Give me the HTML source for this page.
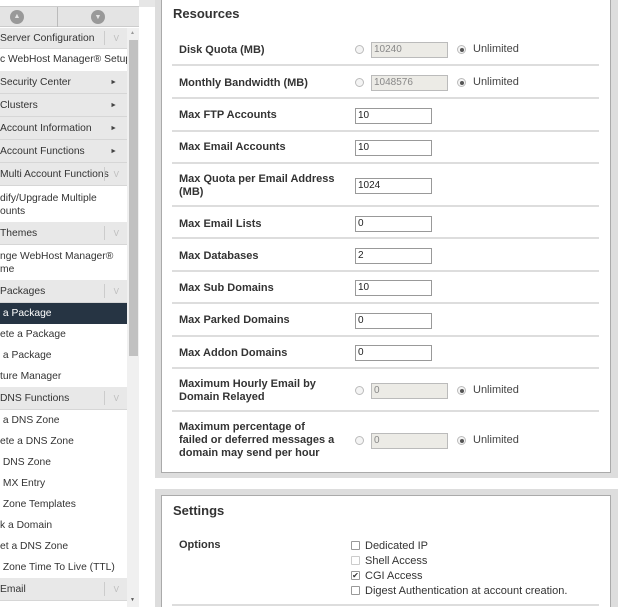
<!DOCTYPE html><html><head><style>
*{margin:0;padding:0;box-sizing:border-box}
body{width:618px;height:607px;overflow:hidden;background:#fff;font-family:"Liberation Sans",sans-serif;position:relative;color:#333}
.a{position:absolute}
.sb{left:0;width:127px;font-size:10.3px;white-space:nowrap;overflow:hidden}
.h{background:#e8e8e8;border-bottom:1px solid #d6d6d6;color:#333}
.i{background:#fff;color:#333}
.lb{position:absolute;left:179px;font-size:11px;font-weight:bold;color:#333;line-height:13px}
.sep{position:absolute;left:172px;width:427px;height:2px;background:#ddd}
.in{position:absolute;left:355px;width:77px;height:16px;border:1px solid #999;background:#fff;font-size:10px;padding-left:2px;line-height:14px;color:#222}
.ro{position:absolute;width:77px;height:16px;border:1px solid #bbb;background:#ecebe6;font-size:10px;padding-left:2px;line-height:14px;color:#888}
.rd{position:absolute;width:9px;height:9px;border-radius:50%;border:1px solid #bbb;background:#f4f4f4}
.rd.on::after{content:"";position:absolute;left:1.5px;top:1.5px;width:4px;height:4px;border-radius:50%;background:#555}
.un{position:absolute;font-size:11px;color:#444}
.cb{position:absolute;left:351px;width:9px;height:9px;border:1px solid #999;background:#fff;border-radius:1px}
.ct{position:absolute;left:365px;font-size:11px;color:#333}
.chev{position:absolute;right:8px;color:#bbb;font-size:8px}
.vl{position:absolute;right:22px;width:1px;height:14px;background:#ccc}
.tri{position:absolute;right:10px;font-size:7px;color:#444}
</style></head><body>
<div class="a" style="left:0;top:0;width:139px;height:7px;background:#fff;border-bottom:1px solid #ccc"></div>
<div class="a" style="left:0;top:7px;width:139px;height:20px;background:#e4e4e4;border-bottom:1px solid #ccc"></div>
<div class="a" style="left:57px;top:7px;width:1px;height:20px;background:#bbb"></div>
<div class="a" style="left:10px;top:10px;width:14px;height:14px;border-radius:50%;background:#999;color:#e4e4e4;font-size:7px;text-align:center;line-height:13px">▲</div>
<div class="a" style="left:91px;top:10px;width:14px;height:14px;border-radius:50%;background:#999;color:#e4e4e4;font-size:7px;text-align:center;line-height:15px">▼</div>
<div class="a sb h" style="top:28px;height:21px;line-height:21px">Server Configuration<span class="vl" style="top:3px"></span><span class="chev">V</span></div>
<div class="a sb i" style="top:49px;height:22px;line-height:22px">c WebHost Manager® Setup</div>
<div class="a sb h" style="top:71px;height:23px;line-height:23px">Security Center<span class="tri">►</span></div>
<div class="a sb h" style="top:94px;height:23px;line-height:23px">Clusters<span class="tri">►</span></div>
<div class="a sb h" style="top:117px;height:23px;line-height:23px">Account Information<span class="tri">►</span></div>
<div class="a sb h" style="top:140px;height:23px;line-height:23px">Account Functions<span class="tri">►</span></div>
<div class="a sb h" style="top:163px;height:23px;line-height:23px">Multi Account Functions<span class="vl" style="top:4px"></span><span class="chev">V</span></div>
<div class="a sb i" style="top:186px;height:36px;line-height:13px;padding-top:6px">dify/Upgrade Multiple<br>ounts</div>
<div class="a sb h" style="top:222px;height:23px;line-height:23px">Themes<span class="vl" style="top:4px"></span><span class="chev">V</span></div>
<div class="a sb i" style="top:245px;height:35px;line-height:13px;padding-top:5px">nge WebHost Manager®<br>me</div>
<div class="a sb h" style="top:280px;height:23px;line-height:23px">Packages<span class="vl" style="top:4px"></span><span class="chev">V</span></div>
<div class="a sb" style="top:303px;height:21px;line-height:21px;background:#263443;color:#fff">&nbsp;a Package</div>
<div class="a sb i" style="top:324px;height:21px;line-height:21px">ete a Package</div>
<div class="a sb i" style="top:345px;height:21px;line-height:21px">&nbsp;a Package</div>
<div class="a sb i" style="top:366px;height:21px;line-height:21px">ture Manager</div>
<div class="a sb h" style="top:387px;height:23px;line-height:23px">DNS Functions<span class="vl" style="top:4px"></span><span class="chev">V</span></div>
<div class="a sb i" style="top:410px;height:21px;line-height:21px">&nbsp;a DNS Zone</div>
<div class="a sb i" style="top:431px;height:21px;line-height:21px">ete a DNS Zone</div>
<div class="a sb i" style="top:452px;height:21px;line-height:21px">&nbsp;DNS Zone</div>
<div class="a sb i" style="top:473px;height:21px;line-height:21px">&nbsp;MX Entry</div>
<div class="a sb i" style="top:494px;height:21px;line-height:21px">&nbsp;Zone Templates</div>
<div class="a sb i" style="top:515px;height:21px;line-height:21px">k a Domain</div>
<div class="a sb i" style="top:536px;height:21px;line-height:21px">et a DNS Zone</div>
<div class="a sb i" style="top:557px;height:21px;line-height:21px">&nbsp;Zone Time To Live (TTL)</div>
<div class="a sb h" style="top:578px;height:23px;line-height:23px">Email<span class="vl" style="top:4px"></span><span class="chev">V</span></div>
<div class="a" style="left:127px;top:28px;width:12px;height:579px;background:#f0f0f0"></div>
<div class="a" style="left:129px;top:40px;width:9px;height:316px;background:#c1c1c1"></div>
<div class="a" style="left:130px;top:30px;font-size:5px;color:#999">▲</div>
<div class="a" style="left:130px;top:597px;font-size:5px;color:#555">▼</div>
<div class="a" style="left:139px;top:0;width:479px;height:7px;background:#e6e6e6"></div>
<div class="a" style="left:155px;top:0;width:463px;height:478px;background:#ddd"></div>
<div class="a" style="left:161px;top:0;width:450px;height:473px;background:#fff;border:1px solid #aaa;border-top:none"></div>
<div class="a" style="left:155px;top:489px;width:463px;height:118px;background:#ddd"></div>
<div class="a" style="left:161px;top:495px;width:450px;height:112px;background:#fff;border:1px solid #aaa;border-bottom:none"></div>

<div class="a" style="left:173px;top:6px;font-size:13px;font-weight:bold;color:#333">Resources</div>
<div class="lb" style="top:44px">Disk Quota (MB)</div>
<div class="rd" style="left:355px;top:45px"></div><div class="ro" style="left:371px;top:42px">10240</div>
<div class="rd on" style="left:457px;top:45px"></div><div class="un" style="left:473px;top:43px">Unlimited</div>
<div class="sep" style="top:64px"></div>
<div class="lb" style="top:77px">Monthly Bandwidth (MB)</div>
<div class="rd" style="left:355px;top:78px"></div><div class="ro" style="left:371px;top:75px">1048576</div>
<div class="rd on" style="left:457px;top:78px"></div><div class="un" style="left:473px;top:76px">Unlimited</div>
<div class="sep" style="top:97px"></div>
<div class="lb" style="top:109px">Max FTP Accounts</div><div class="in" style="top:108px">10</div>
<div class="sep" style="top:130px"></div>
<div class="lb" style="top:141px">Max Email Accounts</div><div class="in" style="top:140px">10</div>
<div class="sep" style="top:162px"></div>
<div class="lb" style="top:173px">Max Quota per Email Address<br>(MB)</div><div class="in" style="top:178px">1024</div>
<div class="sep" style="top:205px"></div>
<div class="lb" style="top:218px">Max Email Lists</div><div class="in" style="top:216px">0</div>
<div class="sep" style="top:237px"></div>
<div class="lb" style="top:250px">Max Databases</div><div class="in" style="top:248px">2</div>
<div class="sep" style="top:270px"></div>
<div class="lb" style="top:282px">Max Sub Domains</div><div class="in" style="top:280px">10</div>
<div class="sep" style="top:302px"></div>
<div class="lb" style="top:314px">Max Parked Domains</div><div class="in" style="top:313px">0</div>
<div class="sep" style="top:335px"></div>
<div class="lb" style="top:347px">Max Addon Domains</div><div class="in" style="top:345px">0</div>
<div class="sep" style="top:367px"></div>
<div class="lb" style="top:378px">Maximum Hourly Email by<br>Domain Relayed</div>
<div class="rd" style="left:355px;top:386px"></div><div class="ro" style="left:371px;top:383px">0</div>
<div class="rd on" style="left:457px;top:386px"></div><div class="un" style="left:473px;top:384px">Unlimited</div>
<div class="sep" style="top:410px"></div>
<div class="lb" style="top:421px">Maximum percentage of<br>failed or deferred messages a<br>domain may send per hour</div>
<div class="rd" style="left:355px;top:436px"></div><div class="ro" style="left:371px;top:433px">0</div>
<div class="rd on" style="left:457px;top:436px"></div><div class="un" style="left:473px;top:434px">Unlimited</div>

<div class="a" style="left:173px;top:503px;font-size:13px;font-weight:bold;color:#333">Settings</div>
<div class="lb" style="top:539px">Options</div>
<div class="cb" style="top:541px"></div><div class="ct" style="top:540px">Dedicated IP</div>
<div class="cb" style="top:556px;border-color:#ccc"></div><div class="ct" style="top:555px">Shell Access</div>
<div class="cb" style="top:571px;font-size:8px;line-height:7px;text-align:center">✔</div><div class="ct" style="top:570px">CGI Access</div>
<div class="cb" style="top:586px"></div><div class="ct" style="top:585px">Digest Authentication at account creation.</div>
<div class="sep" style="top:604px"></div>
</body></html>
